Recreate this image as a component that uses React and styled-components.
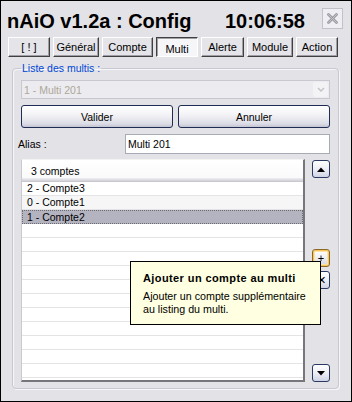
import React from 'react';
import styled, { createGlobalStyle, css } from 'styled-components';

const GlobalStyle = createGlobalStyle`
  html, body {
    margin: 0;
    padding: 0;
  }
  body {
    width: 352px;
    height: 402px;
    overflow: hidden;
    background: #e3e2e7;
    font-family: "Liberation Sans", Arial, sans-serif;
  }
`;

const Window = styled.div`
  position: relative;
  box-sizing: border-box;
  width: 352px;
  height: 402px;
  border: 1px solid #000;
  background: #e3e2e7;
  padding: 0 7px 0 6px;
  display: flex;
  flex-direction: column;
`;

const TitleBar = styled.div`
  display: flex;
  align-items: flex-start;
  box-sizing: border-box;
  height: 36px;
  padding-top: 7px;
  font-size: 20px;
  font-weight: bold;
  line-height: 20px;
  color: #000;
`;

const Title = styled.div`
  flex: 1;
  margin-top: 3px;
`;

const Clock = styled.div`
  margin-top: 3px;
  margin-right: 17px;
`;

const CloseButton = styled.div`
  box-sizing: border-box;
  width: 21px;
  height: 21px;
  margin-right: 1px;
  border: 1px solid #c2c1c9;
  background: #efeef2;
  display: flex;
  align-items: center;
  justify-content: center;
`;

const TabBar = styled.div`
  display: flex;
  gap: 3px;
  margin-left: 1px;
  height: 20px;
`;

const Tab = styled.div`
  box-sizing: border-box;
  width: ${p => p.$w}px;
  height: 20px;
  display: flex;
  align-items: center;
  justify-content: center;
  font-size: 11px;
  color: #000;
  border: 1px solid;
  border-color: #fff #404040 #404040 #fff;
  box-shadow: inset -1px -1px 0 #a09fa6;
  background: #e5e4e9;

  ${p => p.$active && css`
    border-color: #404040 #fff #fff #404040;
    box-shadow: inset 1px 1px 0 #a09fa6;
    background: #f6f6f8;
    padding-top: 3px;
  `}
`;

const Group = styled.fieldset`
  flex: 1;
  min-width: 0;
  margin: 5px 5px 12px 5px;
  padding: 5px 8px 6px 8px;
  border: 1px solid #c9c8d1;
  border-radius: 4px;
  box-shadow: 1px 1px 0 #f7f7f9, inset 1px 1px 0 #f7f7f9;
  display: flex;
  flex-direction: column;
`;

const Legend = styled.legend`
  padding: 0 1px;
  color: #0046d5;
  font-size: 10.5px;
  line-height: 13px;
`;

const Combo = styled.div`
  box-sizing: border-box;
  height: 19px;
  display: flex;
  align-items: center;
  padding-left: 2px;
  border: 1px solid #c9c8d0;
  background: #ecebf0;
  color: #aca899;
  font-size: 10.5px;
`;

const ComboArrow = styled.div`
  margin-left: auto;
  margin-right: 1px;
  width: 15px;
  height: 15px;
  border-radius: 2px;
  background: #f3f3f5;
  display: flex;
  align-items: center;
  justify-content: center;
`;

const ButtonRow = styled.div`
  display: flex;
  gap: 5px;
  margin-top: 6px;
`;

const PushButton = styled.div`
  flex: 1;
  box-sizing: border-box;
  height: 23px;
  border: 1px solid #1f2d55;
  border-radius: 3px;
  background: linear-gradient(#ffffff 0%, #f4f4f7 40%, #dcdce6 85%, #c3c3d3 100%);
  display: flex;
  align-items: center;
  justify-content: center;
  font-size: 10.5px;
  color: #000;
`;

const FieldRow = styled.div`
  display: flex;
  align-items: center;
  margin-top: 6px;
  height: 20px;
`;

const FieldLabel = styled.div`
  width: 107px;
  margin-left: -3px;
  font-size: 10.5px;
  color: #000;
`;

const TextInput = styled.div`
  flex: 1;
  box-sizing: border-box;
  height: 20px;
  border: 1px solid #a7abb8;
  background: #fff;
  padding-left: 2px;
  display: flex;
  align-items: center;
  font-size: 10.5px;
  color: #000;
`;

const ListArea = styled.div`
  flex: 1;
  display: flex;
  margin-top: 5px;
  min-height: 0;
`;

const ListBox = styled.div`
  flex: 1;
  display: flex;
  flex-direction: column;
  overflow: hidden;
  background: #fff;
  border-top: 1px solid #f3f3f3;
  border-left: 1px solid #c9c9ce;
  border-right: 2px solid #76767c;
  border-bottom: 2px solid #76767c;
`;

const ListHeader = styled.div`
  box-sizing: border-box;
  height: 22px;
  flex-shrink: 0;
  display: flex;
  align-items: center;
  padding-left: 9px;
  background: linear-gradient(#ffffff 0%, #fafafb 80%, #e4e4ea 86%, #d6d6dc 93%, #c2c2c9 100%);
  font-size: 10.5px;
  color: #000;
`;

const ListRow = styled.div`
  box-sizing: border-box;
  height: 14px;
  flex-shrink: 0;
  padding-left: 5px;
  border-bottom: 1px solid #e4e4e6;
  background: ${p => (p.$alt ? '#f6f6f7' : '#fff')};
  font-size: 10.5px;
  line-height: 13px;
  color: #000;

  ${p => p.$selected && css`
    background: #b4b3c0;
    border: 1px dotted #6a6a70;
    padding-left: 4px;
    line-height: 12px;
  `}
`;

const SideColumn = styled.div`
  width: 18px;
  margin-left: 7px;
  padding-top: 1px;
  display: flex;
  flex-direction: column;
  justify-content: space-between;
`;

const SideGroup = styled.div`
  display: flex;
  flex-direction: column;
  gap: 4px;
  margin-bottom: 4px;
`;

const SmallButton = styled.div`
  box-sizing: border-box;
  width: 18px;
  height: 18px;
  border: 1px solid #2a3a63;
  border-radius: 3px;
  background: linear-gradient(#ffffff 0%, #eeeff5 50%, #cfd3e4 100%);
  display: flex;
  align-items: center;
  justify-content: center;
  font-size: 11px;
  line-height: 11px;
  color: #000;

  ${p => p.$hover && css`
    border-color: #8a6a2a;
    box-shadow: inset 0 0 0 1px #f8c25a, inset 0 0 0 2px #fde3a6;
  `}
`;

const Tooltip = styled.div`
  position: absolute;
  left: 129px;
  top: 260px;
  box-sizing: border-box;
  width: 191px;
  height: 64px;
  padding: 10px 8px 8px 12px;
  border: 1px solid #000;
  background: #ffffe1;
  color: #000;
`;

const TipTitle = styled.div`
  font-size: 11px;
  font-weight: bold;
  letter-spacing: 0.4px;
  line-height: 13px;
  margin-bottom: 5px;
`;

const TipText = styled.div`
  font-size: 10.7px;
  line-height: 13px;
`;

const tabs = [
  { label: '[ ! ]', w: 42 },
  { label: 'Général', w: 46 },
  { label: 'Compte', w: 51 },
  { label: 'Multi', w: 42, active: true },
  { label: 'Alerte', w: 43 },
  { label: 'Module', w: 46 },
  { label: 'Action', w: 42 },
];

const comptes = [
  { label: '2 - Compte3' },
  { label: '0 - Compte1', alt: true },
  { label: '1 - Compte2', selected: true },
];

const Triangle = ({ down }) => (
  <svg width="8" height="5" viewBox="0 0 8 5">
    <path d={down ? 'M0 0h8L4 4.5z' : 'M0 5h8L4 0.5z'} fill="#000" />
  </svg>
);

export default function App() {
  const blanks = Array.from({ length: 11 });

  return (
    <>
      <GlobalStyle />
      <Window>
        <TitleBar>
          <Title>nAiO v1.2a : Config</Title>
          <Clock>10:06:58</Clock>
          <CloseButton>
            <svg width="11" height="11" viewBox="0 0 11 11">
              <path d="M1.5 1.5l8 8M9.5 1.5l-8 8" stroke="#9d9ca3" strokeWidth="2.8" strokeLinecap="round" />
              <path d="M1.5 1.5l8 8M9.5 1.5l-8 8" stroke="#c4c4ca" strokeWidth="1" strokeLinecap="round" />
            </svg>
          </CloseButton>
        </TitleBar>

        <TabBar>
          {tabs.map(t => (
            <Tab key={t.label} $w={t.w} $active={t.active}>{t.label}</Tab>
          ))}
        </TabBar>

        <Group>
          <Legend>Liste des multis :</Legend>
          <Combo>
            1 - Multi 201
            <ComboArrow>
              <svg width="8" height="5" viewBox="0 0 8 5">
                <path d="M1 1l3 3 3-3" stroke="#c4c3cc" strokeWidth="1.5" fill="none" />
              </svg>
            </ComboArrow>
          </Combo>

          <ButtonRow>
            <PushButton>Valider</PushButton>
            <PushButton>Annuler</PushButton>
          </ButtonRow>

          <FieldRow>
            <FieldLabel>Alias :</FieldLabel>
            <TextInput>Multi 201</TextInput>
          </FieldRow>

          <ListArea>
            <ListBox>
              <ListHeader>3 comptes</ListHeader>
              {comptes.map(c => (
                <ListRow key={c.label} $alt={c.alt} $selected={c.selected}>{c.label}</ListRow>
              ))}
              {blanks.map((_, i) => (
                <ListRow key={i} />
              ))}
            </ListBox>

            <SideColumn>
              <SmallButton><Triangle /></SmallButton>
              <SideGroup>
                <SmallButton $hover>+</SmallButton>
                <SmallButton>✕</SmallButton>
              </SideGroup>
              <SmallButton><Triangle down /></SmallButton>
            </SideColumn>
          </ListArea>
        </Group>

        <Tooltip>
          <TipTitle>Ajouter un compte au multi</TipTitle>
          <TipText>Ajouter un compte supplémentaire</TipText>
          <TipText>au listing du multi.</TipText>
        </Tooltip>
      </Window>
    </>
  );
}
